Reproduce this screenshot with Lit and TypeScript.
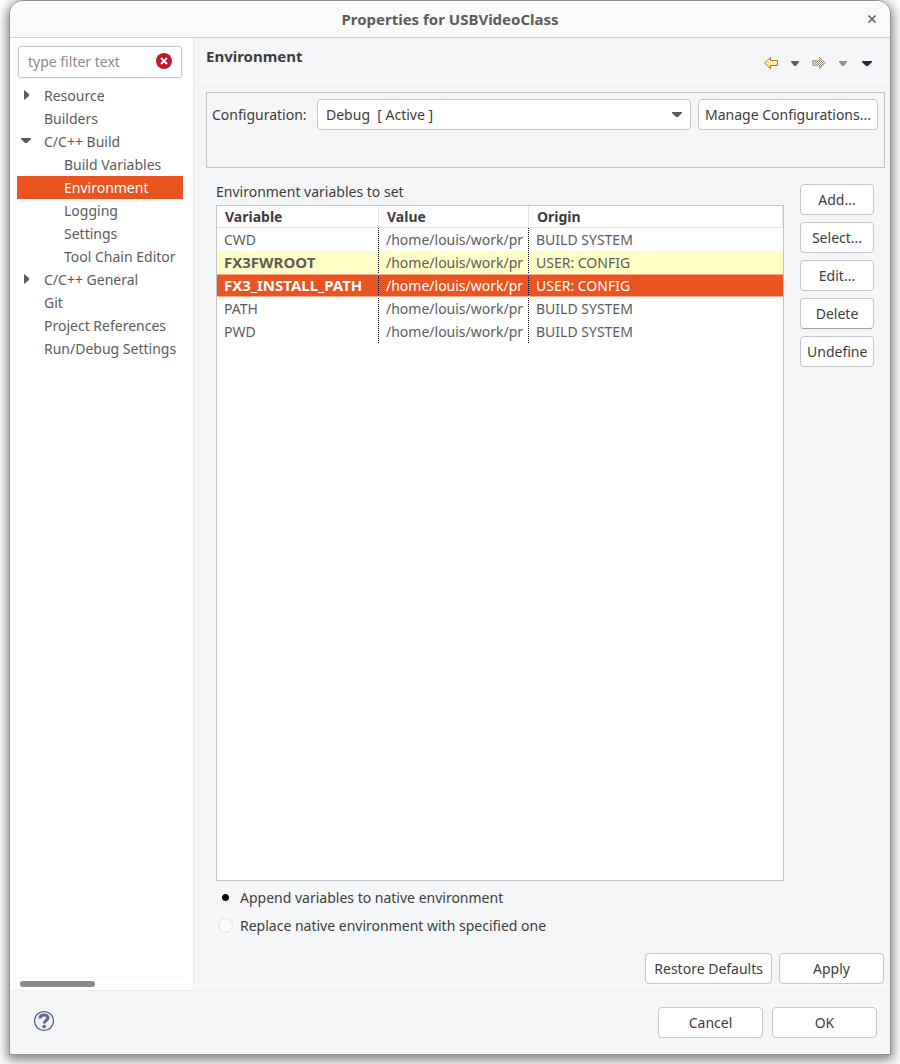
import { LitElement, html, css, svg } from "lit";
import { customElement, state } from "lit/decorators.js";
import { classMap } from "lit/directives/class-map.js";

interface TreeItem {
  label: string;
  level: number;
  arrow?: "open" | "closed";
}

interface EnvVariable {
  name: string;
  value: string;
  origin: string;
  user?: boolean;
}

const TREE: TreeItem[] = [
  { label: "Resource", level: 0, arrow: "closed" },
  { label: "Builders", level: 0 },
  { label: "C/C++ Build", level: 0, arrow: "open" },
  { label: "Build Variables", level: 1 },
  { label: "Environment", level: 1 },
  { label: "Logging", level: 1 },
  { label: "Settings", level: 1 },
  { label: "Tool Chain Editor", level: 1 },
  { label: "C/C++ General", level: 0, arrow: "closed" },
  { label: "Git", level: 0 },
  { label: "Project References", level: 0 },
  { label: "Run/Debug Settings", level: 0 },
];

const VARIABLES: EnvVariable[] = [
  { name: "CWD", value: "/home/louis/work/pr", origin: "BUILD SYSTEM" },
  { name: "FX3FWROOT", value: "/home/louis/work/pr", origin: "USER: CONFIG", user: true },
  { name: "FX3_INSTALL_PATH", value: "/home/louis/work/pr", origin: "USER: CONFIG", user: true },
  { name: "PATH", value: "/home/louis/work/pr", origin: "BUILD SYSTEM" },
  { name: "PWD", value: "/home/louis/work/pr", origin: "BUILD SYSTEM" },
];

const ACTIONS = ["Add...", "Select...", "Edit...", "Delete", "Undefine"];

const ARROW = "M1.5 7 L7.5 1.5 V4.5 H14.5 V9.5 H7.5 V12.5 Z";

const caret = (color: string, width = 10) => svg`
  <svg width=${width} height="5" viewBox="0 0 10 5" preserveAspectRatio="none" aria-hidden="true">
    <path d="M0 0 H10 V1 L6 5 H4 L0 1 Z" fill=${color} />
  </svg>`;

@customElement("app-root")
export class AppRoot extends LitElement {
  @state() private page = "Environment";
  @state() private variable = "FX3_INSTALL_PATH";
  @state() private mode = "append";

  static styles = css`
    :host {
      display: flex;
      box-sizing: border-box;
      min-height: 100vh;
      padding: 0 9px 9px;
      overflow: hidden;
      background: #fff;
      color: #3d3d3d;
      font: 14px/23px "Noto Sans", "Open Sans", sans-serif;
    }
    * {
      box-sizing: border-box;
    }
    button,
    input,
    select {
      margin: 0;
      color: inherit;
      font: inherit;
    }
    .window {
      flex: 1;
      min-width: 0;
      display: flex;
      flex-direction: column;
      border: 1px solid #929292;
      border-radius: 14px 14px 0 0;
      background: #f5f6f7;
      box-shadow: 0 3px 12px 2px rgba(0, 0, 0, 0.5);
      overflow: hidden;
    }
    .titlebar {
      display: grid;
      grid-template-columns: 36px 1fr 36px;
      align-items: center;
      height: 37px;
      border-bottom: 1px solid #cfd0d2;
      background: #fafafa;
    }
    .titlebar h1 {
      grid-column: 2;
      margin: 0;
      font-size: 15px;
      line-height: 23px;
      text-align: center;
      color: #5c5c5c;
    }
    .icon {
      display: grid;
      place-items: center;
      padding: 0;
      border: 0;
      background: none;
    }
    .body {
      flex: 1;
      display: grid;
      grid-template-columns: 184px minmax(0, 1fr);
      min-height: 0;
    }
    .sidebar {
      display: flex;
      flex-direction: column;
      padding: 7px 10px 0 7px;
      border-right: 1px solid #ebedef;
      background: #fff;
    }
    .filter {
      display: flex;
      align-items: center;
      height: 34px;
      padding: 0 10px 2px;
      margin-bottom: 5px;
      border: 1px solid #f5f6f7;
      border-radius: 4px;
      box-shadow: inset 0 0 0 1px #c3c6cd;
    }
    .filter input {
      flex: 1;
      min-width: 0;
      padding: 0;
      border: 0;
      outline: 0;
      background: none;
    }
    .filter input::placeholder {
      color: #8b8b8b;
    }
    .tree {
      flex: 1;
      margin: 0;
      padding: 0;
      list-style: none;
      color: #5c5c5c;
    }
    .tree button {
      display: grid;
      grid-template-columns: 27px 1fr;
      width: 100%;
      height: 23px;
      padding: 0;
      border: 0;
      background: none;
      text-align: left;
      white-space: nowrap;
    }
    .tree .child {
      grid-template-columns: 47px 1fr;
    }
    .tree .current {
      background: #e95420;
      color: #fff;
    }
    .twist {
      display: flex;
      align-items: center;
      height: 21px;
      padding-left: 4px;
    }
    .track {
      padding: 3px;
      border-top: 1px solid #f3f4f5;
    }
    .thumb {
      width: 75px;
      height: 6px;
      border-radius: 3px;
      background: #8b8b8b;
    }
    .main {
      display: flex;
      flex-direction: column;
      min-width: 0;
    }
    .heading {
      display: flex;
      justify-content: space-between;
      height: 49px;
      padding: 7px 11px 0 12px;
      border-bottom: 1px solid #ebedef;
    }
    .heading h2 {
      margin: 0;
      font-size: 15px;
      line-height: 23px;
    }
    .nav {
      display: flex;
      align-items: center;
      height: 36px;
    }
    .nav .icon {
      width: 24px;
      height: 24px;
    }
    .config {
      display: flex;
      align-items: flex-start;
      gap: 7px;
      height: 76px;
      margin: 5px 5px 0 12px;
      padding: 6px 6px 0 5px;
      border: 1px solid #c0c4cb;
    }
    .config label {
      width: 98px;
      line-height: 31px;
      white-space: nowrap;
    }
    .combo {
      flex: 1;
      display: grid;
      align-items: center;
      min-width: 0;
    }
    .combo select,
    .combo span {
      grid-area: 1 / 1;
    }
    .combo select {
      width: 100%;
      appearance: none;
      text-align: left;
      padding: 0 30px 0 8px;
    }
    .combo span {
      display: flex;
      justify-self: end;
      padding-right: 9px;
      pointer-events: none;
    }
    .btn,
    .combo select {
      height: 31px;
      border: 1px solid #c3c6cd;
      border-radius: 4px;
      background: #fff;
    }
    .btn {
      padding: 0 6px;
      line-height: 23px;
      text-align: center;
      white-space: nowrap;
    }
    .btn.focus {
      border-bottom-color: #9da3ae;
    }
    .content {
      flex: 1;
      display: grid;
      grid-template-columns: minmax(0, 1fr) 74px;
      column-gap: 16px;
      padding: 12px 16px 16px 22px;
    }
    .variables {
      display: flex;
      flex-direction: column;
    }
    .caption {
      line-height: 23px;
    }
    .list {
      flex: 1;
      margin-top: 2px;
      border: 1px solid #c0c4cb;
      background: #fff;
    }
    table {
      width: 100%;
      border-collapse: separate;
      border-spacing: 0;
      table-layout: fixed;
      color: #5c5c5c;
    }
    .name {
      width: 162px;
    }
    .value {
      width: 150px;
    }
    th {
      height: 22px;
      padding: 0 8px;
      border-right: 1px solid #e3e4e6;
      border-bottom: 1px solid #e3e4e6;
      line-height: 21px;
      text-align: left;
      color: #3d3d3d;
    }
    td {
      height: 23px;
      padding: 0 0 0 7px;
      overflow: hidden;
      white-space: nowrap;
      line-height: 23px;
    }
    td:not(:last-child) {
      background: repeating-linear-gradient(#000 0 1px, transparent 1px 2px) right / 1px 100% no-repeat;
    }
    tr:nth-child(even) td:not(:last-child) {
      background-image: repeating-linear-gradient(transparent 0 1px, #000 1px 2px);
    }
    .user {
      background: #fffec4;
    }
    .user .key {
      font-size: 15px;
      font-weight: 700;
    }
    .selected {
      background: #e95420;
      color: #fff;
    }
    .selected td {
      box-shadow: inset 0 1px #f6a98c, inset 0 -1px #f6a98c;
    }
    .actions {
      display: flex;
      flex-direction: column;
      gap: 7px;
      padding-top: 4px;
    }
    .modes {
      display: grid;
      gap: 5px;
      margin: 0;
      padding: 5px 0 0;
      border: 0;
    }
    .modes label {
      display: flex;
      align-items: center;
      gap: 7px;
    }
    .modes input {
      appearance: none;
      width: 15px;
      height: 15px;
      margin-left: 2px;
      border: 1px solid #dfdfdf;
      border-radius: 50%;
      background: #fafafa;
    }
    .modes input:checked {
      border-color: transparent;
      background: radial-gradient(circle, #000 0 2px, #000 3px, transparent 4px);
    }
    .apply {
      display: flex;
      justify-content: flex-end;
      gap: 7px;
      padding: 0 6px 6px 0;
    }
    .apply .btn {
      padding: 0 8px;
    }
    .wide {
      width: 105px;
    }
    .footer {
      display: flex;
      align-items: center;
      gap: 9px;
      height: 64px;
      padding: 0 13px 0 23px;
      border-top: 1px solid #ebedef;
    }
    .footer .icon {
      margin-right: auto;
      padding-bottom: 4px;
    }
  `;

  private renderTree() {
    return TREE.map(
      (item) => html`<li>
        <button
          class=${classMap({ child: item.level === 1, current: item.label === this.page })}
          @click=${() => (this.page = item.label)}
        >
          <span class="twist">
            ${item.arrow === "open"
              ? caret("#5c5c5c")
              : item.arrow === "closed"
                ? html`<svg width="10" height="10" viewBox="0 0 10 10" aria-hidden="true">
                    <path d="M3 0 L8 4 V6 L3 10 Z" fill="#5c5c5c" />
                  </svg>`
                : ""}
          </span>
          <span>${item.label}</span>
        </button>
      </li>`
    );
  }

  private renderTable() {
    return html`<table aria-label="Environment variables to set">
      <thead>
        <tr>
          <th class="name">Variable</th>
          <th class="value">Value</th>
          <th>Origin</th>
        </tr>
      </thead>
      <tbody>
        ${VARIABLES.map(
          (v) => html`<tr
            class=${classMap({ user: !!v.user, selected: v.name === this.variable })}
            @click=${() => (this.variable = v.name)}
          >
            <td class="key">${v.name}</td>
            <td>${v.value}</td>
            <td>${v.origin}</td>
          </tr>`
        )}
      </tbody>
    </table>`;
  }

  private renderMode(value: string, label: string) {
    return html`<label>
      <input
        type="radio"
        name="mode"
        value=${value}
        .checked=${this.mode === value}
        @change=${() => (this.mode = value)}
      />${label}
    </label>`;
  }

  render() {
    return html`<div class="window">
      <header class="titlebar">
        <h1>Properties for USBVideoClass</h1>
        <button class="icon" aria-label="Close">
          <svg width="10" height="10" viewBox="0 0 10 10">
            <path d="M1.5 1.5 L8.5 8.5 M8.5 1.5 L1.5 8.5" stroke="#5c5c5c" stroke-width="1.5" />
          </svg>
        </button>
      </header>

      <div class="body">
        <nav class="sidebar">
          <div class="filter">
            <input type="text" placeholder="type filter text" aria-label="Filter" />
            <button class="icon" aria-label="Clear">
              <svg width="16" height="16" viewBox="0 0 16 16">
                <circle cx="8" cy="8" r="8" fill="#c7162b" />
                <path d="M5 5 L11 11 M11 5 L5 11" stroke="#fff" stroke-width="2" />
              </svg>
            </button>
          </div>
          <ul class="tree">
            ${this.renderTree()}
          </ul>
          <div class="track"><div class="thumb"></div></div>
        </nav>

        <main class="main">
          <div class="heading">
            <h2>Environment</h2>
            <div class="nav">
              <button class="icon" aria-label="Back">
                <svg width="16" height="14" viewBox="0 0 16 14">
                  <defs>
                    <linearGradient id="gold" x1="0" y1="0" x2="0" y2="1">
                      <stop offset="0" stop-color="#fffbe0" />
                      <stop offset="1" stop-color="#fbe08a" />
                    </linearGradient>
                  </defs>
                  <path d=${ARROW} fill="url(#gold)" stroke="#b5790e" />
                </svg>
              </button>
              <button class="icon" aria-label="Back history">${caret("#5c5c5c", 8)}</button>
              <button class="icon" aria-label="Forward">
                <svg width="16" height="14" viewBox="0 0 16 14">
                  <defs>
                    <pattern id="dots" width="2" height="2" patternUnits="userSpaceOnUse">
                      <rect width="1" height="1" fill="#8f8674" />
                      <rect x="1" y="1" width="1" height="1" fill="#8f8674" />
                    </pattern>
                  </defs>
                  <g transform="matrix(-1 0 0 1 16 0)">
                    <path d=${ARROW} fill="url(#dots)" stroke="#8a7654" stroke-dasharray="1 1" />
                  </g>
                </svg>
              </button>
              <button class="icon" aria-label="Forward history">${caret("#919191", 8)}</button>
              <button class="icon" aria-label="View menu">${caret("#2a2350")}</button>
            </div>
          </div>

          <section class="config">
            <label for="configuration">Configuration:</label>
            <div class="combo">
              <select id="configuration">
                <option>Debug&nbsp; [ Active ]</option>
              </select>
              <span>${caret("#5c5c5c")}</span>
            </div>
            <button class="btn">Manage Configurations...</button>
          </section>

          <section class="content">
            <div class="variables">
              <div class="caption">Environment variables to set</div>
              <div class="list">${this.renderTable()}</div>
              <fieldset class="modes">
                ${this.renderMode("append", "Append variables to native environment")}
                ${this.renderMode("replace", "Replace native environment with specified one")}
              </fieldset>
            </div>
            <div class="actions">
              ${ACTIONS.map(
                (a) => html`<button class=${classMap({ btn: true, focus: a === "Delete" })}>${a}</button>`
              )}
            </div>
          </section>

          <div class="apply">
            <button class="btn">Restore Defaults</button>
            <button class="btn wide">Apply</button>
          </div>
        </main>
      </div>

      <footer class="footer">
        <button class="icon" aria-label="Help">
          <svg width="22" height="22" viewBox="0 0 22 22">
            <circle cx="11" cy="11" r="9.5" fill="#f0f0f0" stroke="#4a5c80" stroke-width="1.2" />
            <path
              d="M7 8.4 C7 3.8 15 4 15 7.8 C15 10.4 11.2 10.4 11.2 13.6"
              fill="none"
              stroke="#5a6a8c"
              stroke-width="3"
            />
            <circle cx="11.2" cy="16.6" r="1.8" fill="#5a6a8c" />
          </svg>
        </button>
        <button class="btn wide">Cancel</button>
        <button class="btn wide">OK</button>
      </footer>
    </div>`;
  }
}
